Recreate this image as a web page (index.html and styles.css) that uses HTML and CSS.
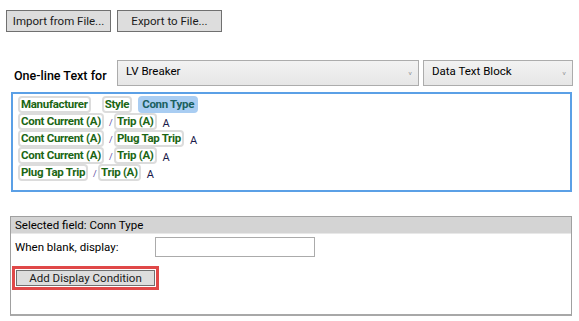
FILE: index.html
```html
<!DOCTYPE html>
<html lang="en">
<head>
    <meta charset="UTF-8">
    <title>One-line Text</title>
    <link rel="stylesheet" href="styles.css">
</head>
<body>
    <div class="toolbar">
        <button class="btn">Import from File...</button>
        <button class="btn">Export to File...</button>
    </div>

    <div class="line-row">
        <span class="line-label">One-line Text for</span>
        <div class="combo combo-wide">LV Breaker<span class="chev">&#x2c5;</span></div>
        <div class="combo combo-narrow">Data Text Block<span class="chev">&#x2c5;</span></div>
    </div>

    <div class="editor">
        <div class="tok-row">
            <span class="tok">Manufacturer</span>
            <span class="gap"></span>
            <span class="tok">Style</span>
            <span class="tok selected">Conn Type</span>
        </div>
        <div class="tok-row">
            <span class="tok">Cont Current (A)</span>
            <span class="sep">/</span>
            <span class="tok">Trip (A)</span>
            <span class="unit">A</span>
        </div>
        <div class="tok-row">
            <span class="tok">Cont Current (A)</span>
            <span class="sep">/</span>
            <span class="tok">Plug Tap Trip</span>
            <span class="unit">A</span>
        </div>
        <div class="tok-row">
            <span class="tok">Cont Current (A)</span>
            <span class="sep">/</span>
            <span class="tok">Trip (A)</span>
            <span class="unit">A</span>
        </div>
        <div class="tok-row">
            <span class="tok">Plug Tap Trip</span>
            <span class="sep">/</span>
            <span class="tok">Trip (A)</span>
            <span class="unit">A</span>
        </div>
    </div>

    <div class="field-panel">
        <div class="panel-head">Selected field: Conn Type</div>
        <div class="blank-row">
            <label for="blank-input">When blank, display:</label>
            <input type="text" id="blank-input" class="blank-input">
        </div>
        <div class="cond-wrap">
            <button class="btn btn-cond">Add Display Condition</button>
        </div>
    </div>
</body>
</html>
```

FILE: styles.css
```css
body {
    margin: 0;
    background: #ffffff;
    font-family: Roboto, "Noto Sans", sans-serif;
    font-size: 12px;
    color: #000000;
    width: 579px;
    height: 321px;
    overflow: hidden;
}

.toolbar {
    display: flex;
    gap: 6px;
    padding: 10px 0 0 6px;
}

.btn {
    width: 105px;
    height: 22px;
    padding: 0;
    background: #dddddd;
    border: 1px solid #707070;
    font-family: inherit;
    font-size: 11.5px;
    color: #1a1a1a;
}

.line-row {
    display: flex;
    align-items: center;
    margin-top: 28px;
    height: 26px;
}

.line-label {
    width: 103px;
    padding-left: 14px;
    font-size: 12.5px;
    font-weight: 500;
    padding-top: 4px;
}

.combo {
    box-sizing: border-box;
    height: 26px;
    display: flex;
    justify-content: space-between;
    padding: 3px 6px 0 8px;
    background: linear-gradient(#f2f2f2, #e6e6e6);
    border: 1px solid #acacac;
    font-size: 11.5px;
}

.combo-wide {
    width: 302px;
}

.combo-narrow {
    width: 150px;
    margin-left: 4px;
}

.chev {
    color: #6a6a6a;
    font-size: 12px;
    padding-top: 5px;
}

.editor {
    box-sizing: border-box;
    height: 100px;
    margin: 6px 7px 0 11px;
    padding: 2px 0 0 5px;
    border: 2px solid #5ba0e6;
}

.tok-row {
    display: flex;
    align-items: center;
    height: 17px;
}

.tok {
    box-sizing: border-box;
    height: 17px;
    padding: 0 1px;
    border: 2px solid #dcdcdc;
    border-radius: 4px;
    color: #1b6614;
    font-weight: 700;
    font-size: 11.5px;
    letter-spacing: -0.3px;
    line-height: 13px;
}

.tok.selected {
    margin-left: 6px;
    padding: 0 2px 0 2px;
    background: #a9cdf2;
    border-color: #a9cdf2;
    color: #1a6060;
}

.gap {
    width: 11px;
}

.sep {
    width: 10px;
    padding-left: 5px;
    box-sizing: border-box;
    font-size: 9px;
    color: #5a4aa0;
    line-height: 13px;
    padding-top: 3px;
}

.unit {
    margin-left: 6px;
    font-size: 11px;
    color: #1a1a4a;
    padding-top: 3px;
}

.field-panel {
    box-sizing: border-box;
    height: 100px;
    margin: 24px 7px 0 10px;
    border: 1px solid #a0a0a0;
    border-bottom: 2px solid #a8a8a8;
}

.panel-head {
    height: 16px;
    padding-left: 4px;
    background: #d4d4d4;
    border-bottom: 1px solid #e8e8e8;
    font-size: 11.5px;
    line-height: 16px;
}

.blank-row {
    display: flex;
    align-items: center;
    padding: 3px 0 0 4px;
}

.blank-row label {
    width: 140px;
    font-size: 11.5px;
}

.blank-input {
    box-sizing: border-box;
    width: 160px;
    height: 20px;
    margin: 0;
    border: 1px solid #ababab;
}

.cond-wrap {
    margin: 9px 0 0 1px;
    width: 147px;
    height: 24px;
    box-sizing: border-box;
    border: 3px solid #e04848;
    padding: 1px 0 0 1px;
}

.btn-cond {
    width: 139px;
    height: 16px;
    font-size: 11.5px;
    line-height: 14px;
}
```
